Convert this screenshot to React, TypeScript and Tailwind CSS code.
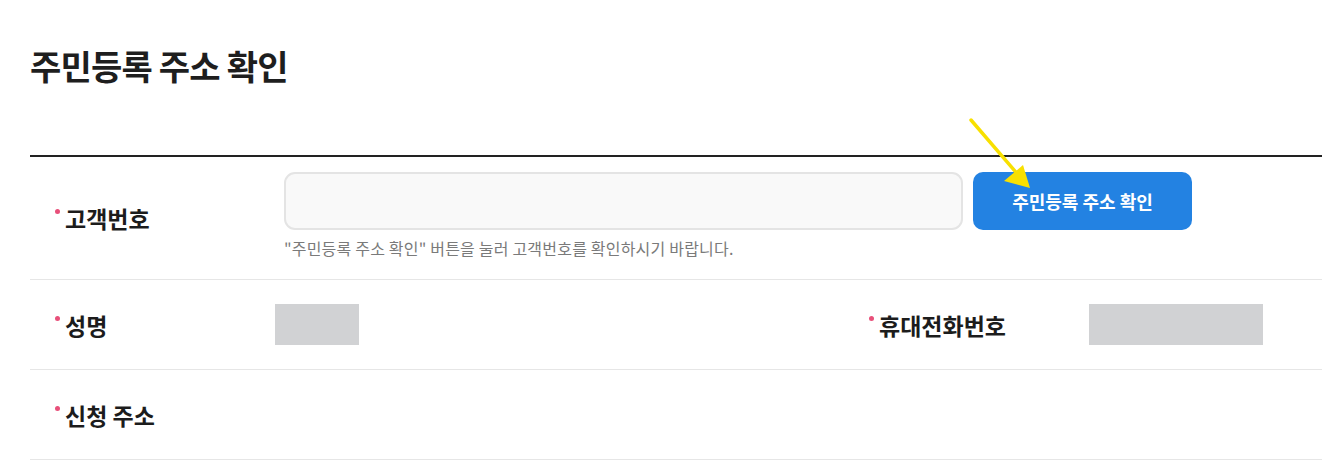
const font = "font-['Noto_Sans_CJK_KR','Noto_Sans',sans-serif]"

function Label({ text }: { text: string }) {
  return (
    <div className="flex items-start">
      <span className="mt-[6px] mr-[5px] h-[5px] w-[5px] rounded-full bg-[#e8507a]" />
      <span className="text-[23px] leading-[30px] font-bold text-[#1c1c1c]">{text}</span>
    </div>
  )
}

export default function App() {
  return (
    <div className={`${font} bg-white w-[1322px] h-[471px] pl-[30px] overflow-hidden`}>
      <h1 className="pt-[42px] text-[34px] leading-[48px] font-bold tracking-[-0.8px] text-[#1e1e1e]">
        주민등록 주소 확인
      </h1>

      <div className="mt-[65px] border-t-2 border-[#222]">
        {/* 고객번호 */}
        <div className="flex border-b border-[#e6e6e6] h-[123px]">
          <div className="w-[254px] pl-[25px] pt-[46px]">
            <Label text="고객번호" />
          </div>
          <div className="pt-[15px]">
            <div className="flex gap-[10px]">
              <div className="w-[679px] h-[58px] rounded-[11px] border-2 border-[#e4e4e4] bg-[#f9f9f9]" />
              <div className="relative">
                <button className="w-[219px] h-[58px] rounded-[10px] bg-[#2382e2] text-white text-[18px] font-bold">
                  주민등록 주소 확인
                </button>
                <svg className="absolute left-[-4px] top-[-55px]" width="70" height="80" viewBox="0 0 70 80">
                  <line x1="2" y1="3" x2="51" y2="60" stroke="#f8e000" strokeWidth="3.5" strokeLinecap="round" />
                  <polygon points="61,71 35,64 54,48" fill="#f8e000" />
                </svg>
              </div>
            </div>
            <p className="mt-[7px] text-[16px] leading-[22px] tracking-[0.2px] text-[#7a7a7a]">
              "주민등록 주소 확인" 버튼을 눌러 고객번호를 확인하시기 바랍니다.
            </p>
          </div>
        </div>

        {/* 성명 / 휴대전화번호 */}
        <div className="flex items-center border-b border-[#e6e6e6] h-[90px]">
          <div className="flex items-center w-[814px]">
            <div className="w-[245px] pl-[25px]">
              <Label text="성명" />
            </div>
            <div className="w-[84px] h-[41px] bg-[#d1d2d4]" />
          </div>
          <div className="flex items-center">
            <div className="w-[245px] pl-[25px]">
              <Label text="휴대전화번호" />
            </div>
            <div className="w-[174px] h-[41px] bg-[#d1d2d4]" />
          </div>
        </div>

        {/* 신청 주소 */}
        <div className="flex items-center border-b border-[#e6e6e6] h-[90px]">
          <div className="w-[245px] pl-[25px]">
            <Label text="신청 주소" />
          </div>
        </div>
      </div>
    </div>
  )
}
